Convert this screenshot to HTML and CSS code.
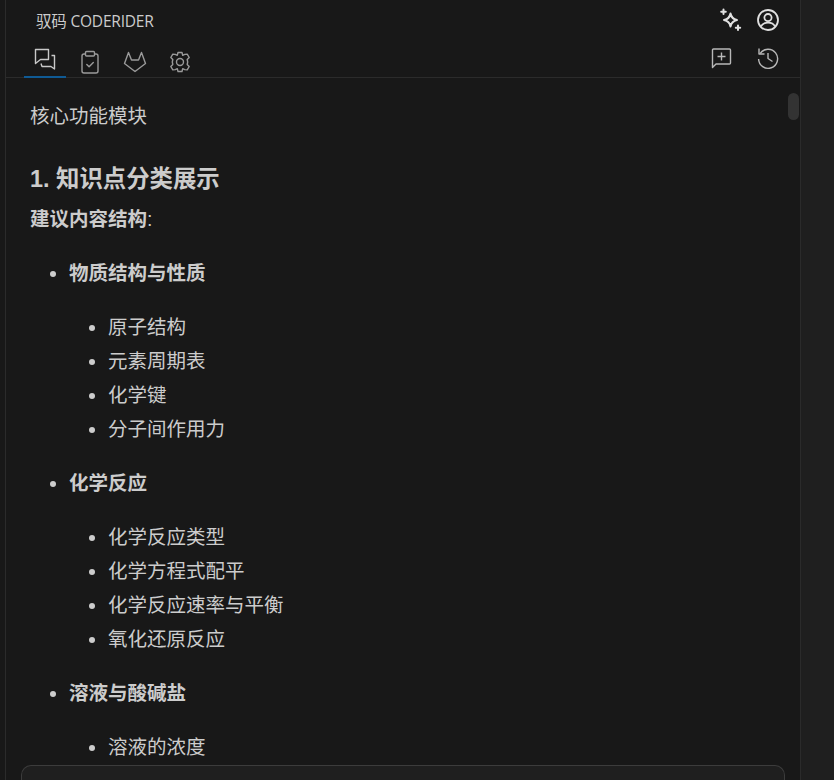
FILE: index.html
```html
<!DOCTYPE html>
<html lang="zh">
<head>
<meta charset="utf-8">
<title>驭码 CODERIDER</title>
<link rel="stylesheet" href="styles.css">
</head>
<body>
<div class="shell">
  <div class="gutter"></div>
  <main class="panel">
    <header class="titlebar">
      <span class="title">驭码 CODERIDER</span>
      <div class="title-actions">
        <svg class="icon-bright" width="24" height="24" viewBox="0 0 24 24" fill="none" stroke="currentColor" stroke-width="2" stroke-linejoin="round" stroke-linecap="round"><path d="M11.5 5.5 C12.3 9.5 14 11.3 18 12 C14 12.8 12.3 14.5 11.5 18.5 C10.8 14.5 9 12.8 5 12 C9 11.3 10.8 9.5 11.5 5.5Z"/><path d="M4.5 1.5v4.5M2.2 3.8h4.6M19 17.5v4.5M16.8 19.8h4.4"/></svg>
        <svg class="icon-bright" width="24" height="24" viewBox="0 0 24 24" fill="none" stroke="currentColor" stroke-width="1.8"><circle cx="12" cy="12" r="10"/><circle cx="12" cy="9.6" r="3.6"/><path d="M5 18.5c1.5-3 4-3.8 7-3.8s5.500.8 7 3.800"/></svg>
      </div>
    </header>
    <nav class="tabs">
      <div class="tab-list">
        <div class="tab tab-active">
          <svg width="24" height="24" viewBox="0 0 24 24" fill="none" stroke="currentColor" stroke-width="1.400" stroke-linejoin="round"><path d="M2.500 1.500h13v10h-8l-5 4z"/><path d="M18.500 7.500h3v13.500l-3.500-2.500h-9l-1-3"/></svg>
        </div>
        <div class="tab">
          <svg width="24" height="24" viewBox="0 0 24 24" fill="none" stroke="currentColor" stroke-width="1.400" stroke-linejoin="round"><path d="M7.500 4H6a2 2 0 0 0-2 2v15a2 2 0 0 0 2 2h12a2 2 0 0 0 2-2V6a2 2 0 0 0-2-2h-1.500"/><rect x="7.500" y="1.500" width="9" height="4.500" rx="1"/><path d="M8.800 14.500l2.300 2.300 4.200-4.200" stroke-linecap="round"/></svg>
        </div>
        <div class="tab">
          <svg width="24" height="24" viewBox="0 0 24 24" fill="none" stroke="currentColor" stroke-width="1.400" stroke-linejoin="round"><path d="M12 21.500 1.500 13.500 5.500 2.500 8.500 10h7l3-7.500 4 11z"/></svg>
        </div>
        <div class="tab">
          <svg width="24" height="24" viewBox="0 0 24 24" fill="none" stroke="currentColor" stroke-width="1.400" stroke-linejoin="round"><circle cx="12" cy="12" r="3.500"/><path d="M10 2.500h4l.7 2.800 2-.9 2.500-.3 2 3.400-2 2 .5 2.500-.5 2.500 2 2-2 3.400-2.500-.3-2-.9-.7 2.800h-4l-.7-2.800-2 .9-2.500.3-2-3.400 2-2-.5-2.500.5-2.500-2-2 2-3.400 2.500.3 2 .9z"/></svg>
        </div>
      </div>
      <div class="tab-actions">
        <svg width="24" height="24" viewBox="0 0 24 24" fill="none" stroke="currentColor" stroke-width="1.400" stroke-linejoin="round"><path d="M4.500 3h16a1 1 0 0 1 1 1v13a1 1 0 0 1-1 1H7l-3.500 3.500V4a1 1 0 0 1 1-1z"/><path d="M12.500 6.500v8M8.500 10.500h8"/></svg>
        <svg width="24" height="24" viewBox="0 0 24 24" fill="none" stroke="currentColor" stroke-width="1.400" stroke-linejoin="round"><path d="M4.200 7.500A9.500 9.500 0 1 1 2.600 13"/><path d="M3 2.500v5.500h5.500"/><path d="M12 7v5.500l4.500 3"/></svg>
      </div>
    </nav>
    <div class="content-wrap">
      <article class="content">
        <p class="lead">核心功能模块</p>
        <h3 class="heading">1. 知识点分类展示</h3>
        <p class="sub"><strong>建议内容结构</strong>:</p>
        <ul class="outer">
          <li>
            <p class="group"><strong>物质结构与性质</strong></p>
            <ul class="inner">
              <li>原子结构</li>
              <li>元素周期表</li>
              <li>化学键</li>
              <li>分子间作用力</li>
            </ul>
          </li>
          <li>
            <p class="group"><strong>化学反应</strong></p>
            <ul class="inner">
              <li>化学反应类型</li>
              <li>化学方程式配平</li>
              <li>化学反应速率与平衡</li>
              <li>氧化还原反应</li>
            </ul>
          </li>
          <li>
            <p class="group"><strong>溶液与酸碱盐</strong></p>
            <ul class="inner">
              <li>溶液的浓度</li>
            </ul>
          </li>
        </ul>
      </article>
      <div class="scroll-thumb"></div>
    </div>
    <div class="composer"></div>
  </main>
  <div class="sidebar"></div>
</div>
</body>
</html>
```
FILE: styles.css
```css
* { box-sizing: border-box; }
html, body { margin: 0; height: 100%; overflow: hidden; background: #181818; }
body { font-family: "Liberation Sans", "Noto Sans CJK SC", sans-serif; color: #cccccc; }
.shell { display: flex; height: 780px; }
.gutter { width: 5px; background: #181818; border-right: 1px solid #2b2b2b; flex: none; width: 6px; }
.panel { flex: 1; display: flex; flex-direction: column; background: #181818; min-width: 0; }
.sidebar { width: 34px; flex: none; background: #1f1f1f; border-left: 1px solid #2b2b2b; }
.titlebar { height: 40px; flex: none; display: flex; align-items: center; justify-content: space-between; padding: 0 20px 0 30px; }
.title { font-family: "Open Sans", "Noto Sans CJK SC", sans-serif; font-size: 15.500px; color: #cccccc; letter-spacing: -0.200px; }
.title-actions { display: flex; gap: 13px; color: #e0e0e0; }
.icon-bright { display: block; }
.tabs { height: 38px; flex: none; display: flex; justify-content: space-between; border-bottom: 1px solid #2b2b2b; color: #9a9a9a; padding: 0 18px; }
.tab-list { display: flex; gap: 2px; }
.tab { width: 42px; height: 38px; display: flex; align-items: center; justify-content: center; padding-top: 5px; margin-right: 1px; }
.tab-active { color: #c8c8c8; border-bottom: 2px solid #0f5a94; padding-top: 4px; }
.tab-actions { display: flex; gap: 23px; align-items: center; color: #b8b8b8; padding-bottom: 2px; padding-right: 2px; }
.content-wrap { flex: 1; min-height: 0; position: relative; overflow: hidden; }
.content { padding: 21px 30px 0 24px; font-size: 19.500px; line-height: 34px; }
.content p { margin: 0; }
.lead { }
.heading { margin: 29px 0 0; font-size: 23.400px; line-height: 34px; font-weight: 700; color: #cccccc; }
.sub { margin-top: 6px !important; }
.outer { list-style: disc; margin: 20px 0 0; padding: 0 0 0 39px; }
.outer > li { margin-bottom: 20px; }
.inner { list-style: disc; margin: 20px 0 0; padding: 0 0 0 39px; }
.scroll-thumb { position: absolute; top: 15px; right: 1px; width: 11px; height: 27px; border-radius: 6px; background: #333333; }
.composer { height: 15px; flex: none; margin: 0 15px 0 15px; background: #1f1f1f; border: 1px solid #3c3c3c; border-bottom: none; border-radius: 10px 10px 0 0; }
```
